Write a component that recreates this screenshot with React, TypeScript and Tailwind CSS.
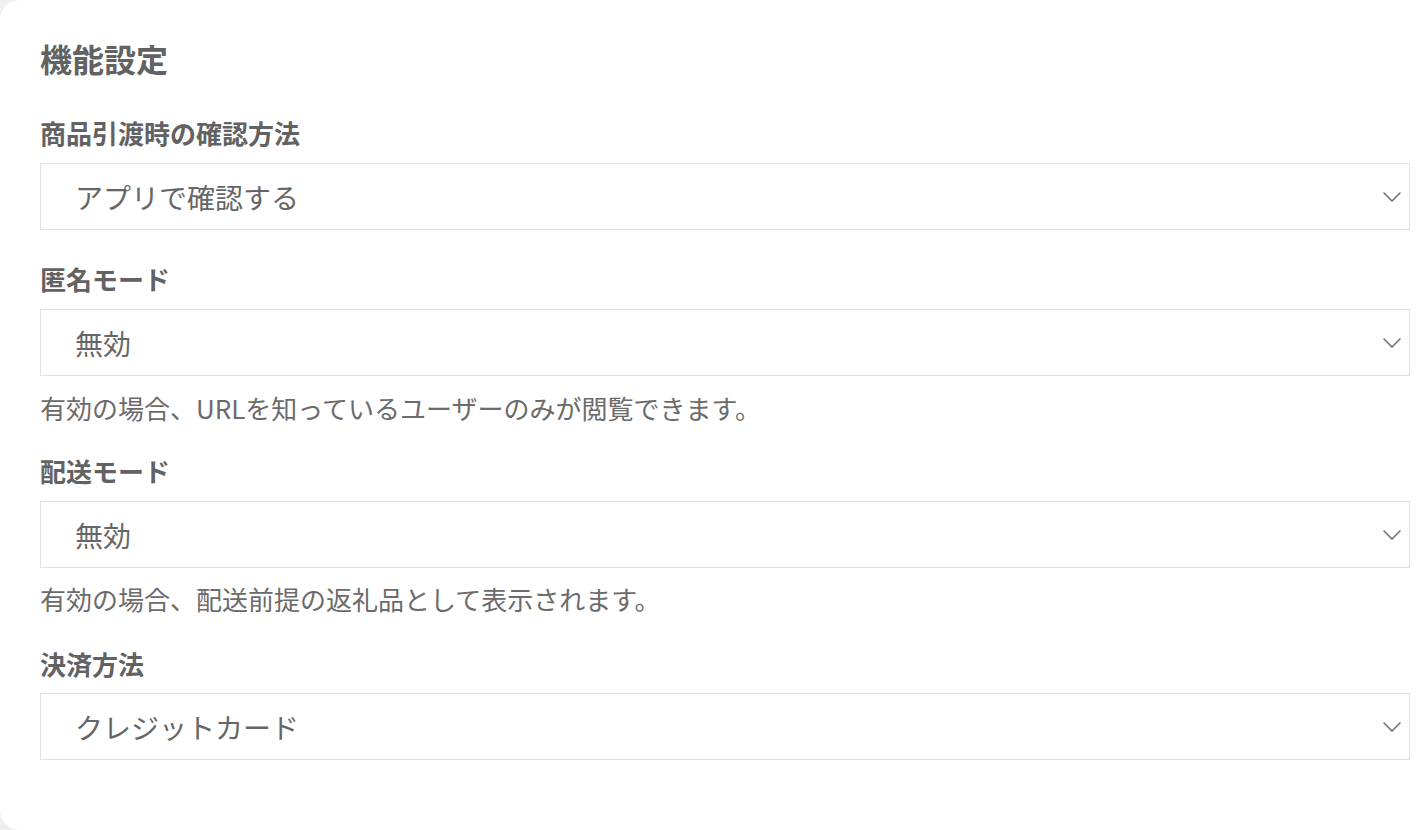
const font = { fontFamily: '"Noto Sans CJK JP", "Noto Sans", sans-serif' };

function SelectBox({ value }: { value: string }) {
    return (
        <div className="flex h-[67px] w-full items-center justify-between border border-[#e2e2e2] bg-white pl-[34px] pr-[8px]">
            <span className="text-[28px] leading-[36px] text-[#666]">{value}</span>
            <svg width="18" height="10" viewBox="0 0 18 10" fill="none" className="mt-[1px]">
                <polyline points="1,1 9,9 17,1" stroke="#6a6a6a" strokeWidth="1.5" strokeLinecap="round" strokeLinejoin="round" />
            </svg>
        </div>
    );
}

export default function App() {
    return (
        <div className="h-[830px] w-full overflow-hidden bg-[#efefef]" style={font}>
            <div className="h-[830px] w-[1450px] rounded-[20px] bg-white px-10 pt-[38px]">
                {/* タイトル */}
                <h1 className="text-[32px] font-bold leading-[40px] text-[#626262]">機能設定</h1>

                {/* 商品引渡時の確認方法 */}
                <div className="mt-[37px] text-[26px] font-bold leading-[36px] text-[#626262]">商品引渡時の確認方法</div>
                <div className="mt-3">
                    <SelectBox value="アプリで確認する" />
                </div>

                {/* 匿名モード */}
                <div className="mt-[31px] text-[26px] font-bold leading-[36px] text-[#626262]">匿名モード</div>
                <div className="mt-3">
                    <SelectBox value="無効" />
                </div>
                <p className="mt-[14px] text-[26px] leading-[36px] text-[#6b6b6b]">
                    有効の場合、URLを知っているユーザーのみが閲覧できます。
                </p>

                {/* 配送モード */}
                <div className="mt-[27px] text-[26px] font-bold leading-[36px] text-[#626262]">配送モード</div>
                <div className="mt-3">
                    <SelectBox value="無効" />
                </div>
                <p className="mt-[13px] text-[26px] leading-[36px] text-[#6b6b6b]">
                    有効の場合、配送前提の返礼品として表示されます。
                </p>

                {/* 決済方法 */}
                <div className="mt-[29px] text-[26px] font-bold leading-[36px] text-[#626262]">決済方法</div>
                <div className="mt-[11px]">
                    <SelectBox value="クレジットカード" />
                </div>
            </div>
        </div>
    );
}
